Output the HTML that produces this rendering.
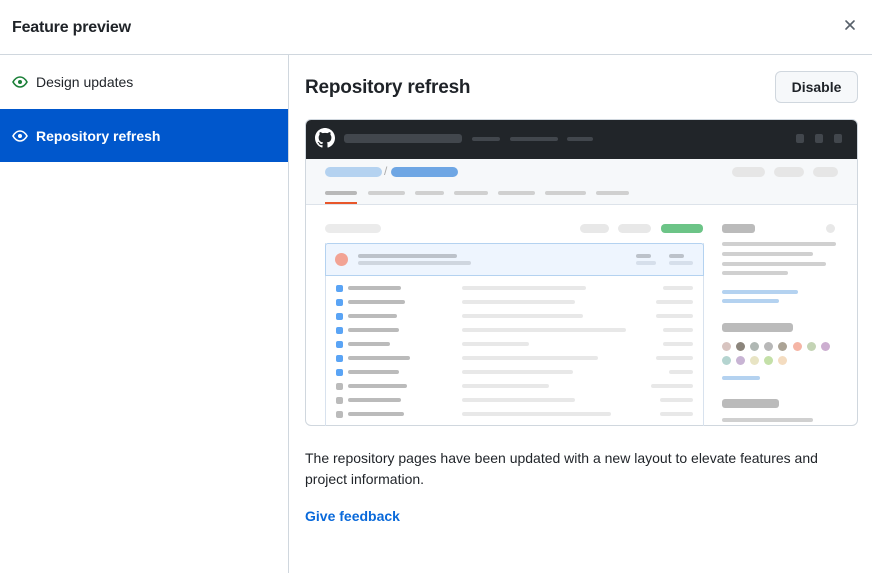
<!DOCTYPE html>
<html><head><meta charset="utf-8"><style>
*{margin:0;padding:0;box-sizing:border-box}
body{width:872px;height:573px;background:#fff;font-family:"Liberation Sans",sans-serif;color:#1f2328;position:relative;overflow:hidden}
.a{position:absolute}
.b{position:absolute;border-radius:3px}
.d{position:absolute;width:9px;height:9px;border-radius:50%}
</style></head><body>
<div class="a" style="left:12px;top:19px;font-size:16px;font-weight:bold;letter-spacing:-0.2px">Feature preview</div>
<svg class="a" style="left:844px;top:19px" width="12" height="12" viewBox="0 0 12 12"><path d="M2 2L10 10M10 2L2 10" stroke="#57606a" stroke-width="1.6" stroke-linecap="round"/></svg>
<div class="a" style="left:0;top:54px;width:872px;height:1px;background:#d0d7de"></div>
<div class="a" style="left:288px;top:55px;width:1px;height:518px;background:#d0d7de"></div>
<svg class="a" style="left:12px;top:76px" width="16" height="12" viewBox="0 0 16 12"><path d="M1 6C3 2.5 5.5 1 8 1s5 1.5 7 5c-2 3.5-4.5 5-7 5S3 9.5 1 6z" fill="none" stroke="#1a7f37" stroke-width="1.6"/><circle cx="8" cy="6" r="2" fill="#1a7f37"/></svg>
<div class="a" style="left:36px;top:74px;font-size:14px;color:#1f2328">Design updates</div>
<div class="a" style="left:0;top:109px;width:288px;height:53px;background:#0057cc"></div>
<svg class="a" style="left:12px;top:130px" width="16" height="12" viewBox="0 0 16 12"><path d="M1 6C3 2.5 5.5 1 8 1s5 1.5 7 5c-2 3.5-4.5 5-7 5S3 9.5 1 6z" fill="none" stroke="#fff" stroke-width="1.6"/><circle cx="8" cy="6" r="2" fill="#fff"/></svg>
<div class="a" style="left:36px;top:128px;font-size:14px;font-weight:bold;color:#fff">Repository refresh</div>

<div class="a" style="left:305px;top:77px;font-size:19px;font-weight:bold;letter-spacing:-0.2px">Repository refresh</div>
<div class="a" style="left:775px;top:71px;width:83px;height:32px;border:1px solid #d0d7de;border-radius:6px;background:#f6f8fa;font-size:14px;font-weight:bold;text-align:center;line-height:30px">Disable</div>

<div class="a" style="left:305px;top:119px;width:553px;height:307px;border:1px solid #d0d7de;border-radius:6px;overflow:hidden;background:#fff">
<div class="a" style="left:0;top:0;width:553px;height:39px;background:#212529"></div>
<div class="a" style="left:0;top:39px;width:553px;height:46px;background:#f6f8fa;border-bottom:1px solid #dde3ea"></div>
</div>
<svg class="a" style="left:315px;top:128px" width="20" height="20" viewBox="0 0 16 16"><path fill="#fff" d="M8 0C3.58 0 0 3.58 0 8c0 3.54 2.29 6.530 5.47 7.59.4.07.55-.17.55-.38 0-.19-.01-.82-.01-1.49-2.01.37-2.53-.49-2.69-.94-.09-.23-.48-.94-.82-1.13-.28-.15-.68-.52-.01-.53.63-.01 1.08.58 1.23.82.72 1.21 1.87.87 2.33.66.07-.52.28-.87.51-1.07-1.78-.2-3.64-.89-3.64-3.95 0-.87.31-1.59.82-2.15-.08-.2-.36-1.02.08-2.12 0 0 .67-.21 2.2.82.64-.18 1.32-.27 2-.27.68 0 1.36.09 2 .27 1.53-1.04 2.2-.82 2.2-.82.44 1.1.16 1.92.08 2.12.51.56.82 1.27.82 2.15 0 3.07-1.87 3.75-3.65 3.95.29.25.54.73.54 1.48 0 1.07-.01 1.93-.01 2.2 0 .21.15.46.55.38A8.013 8.013 0 0016 8c0-4.42-3.58-8-8-8z"/></svg>
<div class="b" style="left:344px;top:134px;width:118px;height:9px;background:#42474d"></div>
<div class="b" style="left:472px;top:137px;width:28px;height:4px;background:#42474d"></div>
<div class="b" style="left:510px;top:137px;width:48px;height:4px;background:#42474d"></div>
<div class="b" style="left:567px;top:137px;width:26px;height:4px;background:#42474d"></div>
<div class="b" style="left:796px;top:134px;width:8px;height:9px;background:#42474d;border-radius:2px"></div>
<div class="b" style="left:815px;top:134px;width:8px;height:9px;background:#42474d;border-radius:2px"></div>
<div class="b" style="left:834px;top:134px;width:8px;height:9px;background:#42474d;border-radius:2px"></div>

<div class="b" style="left:325px;top:167px;width:57px;height:10px;background:#b4d2f0;border-radius:5px"></div>
<div class="a" style="left:384px;top:164px;font-size:12px;color:#aaa">/</div>
<div class="b" style="left:391px;top:167px;width:67px;height:10px;background:#6ea6e4;border-radius:5px"></div>
<div class="b" style="left:732px;top:167px;width:33px;height:10px;background:#e6e6e6;border-radius:5px"></div>
<div class="b" style="left:774px;top:167px;width:30px;height:10px;background:#e6e6e6;border-radius:5px"></div>
<div class="b" style="left:813px;top:167px;width:25px;height:10px;background:#e6e6e6;border-radius:5px"></div>
<div class="b" style="left:325px;top:191px;width:32px;height:4px;background:#b8b8b8"></div>
<div class="b" style="left:368px;top:191px;width:37px;height:4px;background:#d0d0d0"></div>
<div class="b" style="left:415px;top:191px;width:29px;height:4px;background:#d0d0d0"></div>
<div class="b" style="left:454px;top:191px;width:34px;height:4px;background:#d0d0d0"></div>
<div class="b" style="left:498px;top:191px;width:37px;height:4px;background:#d0d0d0"></div>
<div class="b" style="left:545px;top:191px;width:41px;height:4px;background:#d0d0d0"></div>
<div class="b" style="left:596px;top:191px;width:33px;height:4px;background:#d0d0d0"></div>
<div class="a" style="left:325px;top:202px;width:32px;height:2px;background:#e8562a"></div>

<div class="b" style="left:325px;top:224px;width:56px;height:9px;background:#ebebeb;border-radius:5px"></div>
<div class="b" style="left:580px;top:224px;width:29px;height:9px;background:#e8e8e8;border-radius:5px"></div>
<div class="b" style="left:618px;top:224px;width:33px;height:9px;background:#e8e8e8;border-radius:5px"></div>
<div class="b" style="left:661px;top:224px;width:42px;height:9px;background:#6cc487;border-radius:4px"></div>

<div class="a" style="left:325px;top:243px;width:379px;height:183px;border-left:1px solid #d8e2ee;border-right:1px solid #d8e2ee"></div>
<div class="a" style="left:325px;top:243px;width:379px;height:33px;background:#eef5fe;border:1px solid #b4d2f0;border-radius:3px 3px 0 0"></div>
<div class="d" style="left:335px;top:253px;width:13px;height:13px;background:#f2a394"></div>
<div class="b" style="left:358px;top:254px;width:99px;height:4px;background:#bcc2ca"></div>
<div class="b" style="left:358px;top:261px;width:113px;height:4px;background:#cfd6df"></div>
<div class="b" style="left:636px;top:254px;width:15px;height:4px;background:#bcc2ca"></div>
<div class="b" style="left:636px;top:261px;width:20px;height:4px;background:#d6dfeb"></div>
<div class="b" style="left:669px;top:254px;width:15px;height:4px;background:#bcc2ca"></div>
<div class="b" style="left:669px;top:261px;width:24px;height:4px;background:#d6dfeb"></div>

<div class="b" style="left:336px;top:285px;width:7px;height:7px;background:#5aa4f5;border-radius:2px"></div><div class="b" style="left:348px;top:286px;width:53px;height:4px;background:#bbb"></div><div class="b" style="left:462px;top:286px;width:124px;height:4px;background:#e8e8e8"></div><div class="b" style="left:663px;top:286px;width:30px;height:4px;background:#e8e8e8"></div>
<div class="b" style="left:336px;top:299px;width:7px;height:7px;background:#5aa4f5;border-radius:2px"></div><div class="b" style="left:348px;top:300px;width:57px;height:4px;background:#bbb"></div><div class="b" style="left:462px;top:300px;width:113px;height:4px;background:#e8e8e8"></div><div class="b" style="left:656px;top:300px;width:37px;height:4px;background:#e8e8e8"></div>
<div class="b" style="left:336px;top:313px;width:7px;height:7px;background:#5aa4f5;border-radius:2px"></div><div class="b" style="left:348px;top:314px;width:49px;height:4px;background:#bbb"></div><div class="b" style="left:462px;top:314px;width:121px;height:4px;background:#e8e8e8"></div><div class="b" style="left:656px;top:314px;width:37px;height:4px;background:#e8e8e8"></div>
<div class="b" style="left:336px;top:327px;width:7px;height:7px;background:#5aa4f5;border-radius:2px"></div><div class="b" style="left:348px;top:328px;width:51px;height:4px;background:#bbb"></div><div class="b" style="left:462px;top:328px;width:164px;height:4px;background:#e8e8e8"></div><div class="b" style="left:663px;top:328px;width:30px;height:4px;background:#e8e8e8"></div>
<div class="b" style="left:336px;top:341px;width:7px;height:7px;background:#5aa4f5;border-radius:2px"></div><div class="b" style="left:348px;top:342px;width:42px;height:4px;background:#bbb"></div><div class="b" style="left:462px;top:342px;width:67px;height:4px;background:#e8e8e8"></div><div class="b" style="left:663px;top:342px;width:30px;height:4px;background:#e8e8e8"></div>
<div class="b" style="left:336px;top:355px;width:7px;height:7px;background:#5aa4f5;border-radius:2px"></div><div class="b" style="left:348px;top:356px;width:62px;height:4px;background:#bbb"></div><div class="b" style="left:462px;top:356px;width:136px;height:4px;background:#e8e8e8"></div><div class="b" style="left:656px;top:356px;width:37px;height:4px;background:#e8e8e8"></div>
<div class="b" style="left:336px;top:369px;width:7px;height:7px;background:#5aa4f5;border-radius:2px"></div><div class="b" style="left:348px;top:370px;width:51px;height:4px;background:#bbb"></div><div class="b" style="left:462px;top:370px;width:111px;height:4px;background:#e8e8e8"></div><div class="b" style="left:669px;top:370px;width:24px;height:4px;background:#e8e8e8"></div>
<div class="b" style="left:336px;top:383px;width:7px;height:7px;background:#bbb;border-radius:2px"></div><div class="b" style="left:348px;top:384px;width:59px;height:4px;background:#bbb"></div><div class="b" style="left:462px;top:384px;width:87px;height:4px;background:#e8e8e8"></div><div class="b" style="left:651px;top:384px;width:42px;height:4px;background:#e8e8e8"></div>
<div class="b" style="left:336px;top:397px;width:7px;height:7px;background:#bbb;border-radius:2px"></div><div class="b" style="left:348px;top:398px;width:53px;height:4px;background:#bbb"></div><div class="b" style="left:462px;top:398px;width:113px;height:4px;background:#e8e8e8"></div><div class="b" style="left:660px;top:398px;width:33px;height:4px;background:#e8e8e8"></div>
<div class="b" style="left:336px;top:411px;width:7px;height:7px;background:#bbb;border-radius:2px"></div><div class="b" style="left:348px;top:412px;width:56px;height:4px;background:#bbb"></div><div class="b" style="left:462px;top:412px;width:149px;height:4px;background:#e8e8e8"></div><div class="b" style="left:660px;top:412px;width:33px;height:4px;background:#e8e8e8"></div>

<div class="b" style="left:722px;top:224px;width:33px;height:9px;background:#bbb"></div>
<div class="d" style="left:826px;top:224px;background:#e8e8e8"></div>
<div class="b" style="left:722px;top:242px;width:114px;height:4px;background:#d0d0d0"></div>
<div class="b" style="left:722px;top:252px;width:91px;height:4px;background:#d0d0d0"></div>
<div class="b" style="left:722px;top:262px;width:104px;height:4px;background:#d0d0d0"></div>
<div class="b" style="left:722px;top:271px;width:66px;height:4px;background:#d0d0d0"></div>
<div class="b" style="left:722px;top:290px;width:76px;height:4px;background:#b4d2f0"></div>
<div class="b" style="left:722px;top:299px;width:57px;height:4px;background:#b4d2f0"></div>
<div class="b" style="left:722px;top:323px;width:71px;height:9px;background:#bbb"></div>
<div class="d" style="left:722px;top:342px;background:#d8c4c0"></div><div class="d" style="left:736px;top:342px;background:#8c857c"></div><div class="d" style="left:750px;top:342px;background:#b0b8b4"></div><div class="d" style="left:764px;top:342px;background:#b8b8b8"></div><div class="d" style="left:778px;top:342px;background:#aba395"></div><div class="d" style="left:793px;top:342px;background:#f5b5a5"></div><div class="d" style="left:807px;top:342px;background:#c4d4b5"></div><div class="d" style="left:821px;top:342px;background:#ccaed0"></div>
<div class="d" style="left:722px;top:356px;background:#b4d4d0"></div><div class="d" style="left:736px;top:356px;background:#c8b4d4"></div><div class="d" style="left:750px;top:356px;background:#e8e4c4"></div><div class="d" style="left:764px;top:356px;background:#c4e0a8"></div><div class="d" style="left:778px;top:356px;background:#f4dcc0"></div>
<div class="b" style="left:722px;top:376px;width:38px;height:4px;background:#b4d2f0"></div>
<div class="b" style="left:722px;top:399px;width:57px;height:9px;background:#bbb"></div>
<div class="b" style="left:722px;top:418px;width:91px;height:4px;background:#d0d0d0"></div>

<div class="a" style="left:305px;top:448px;width:550px;font-size:14px;line-height:21px;color:#1f2328">The repository pages have been updated with a new layout to elevate features and project information.</div>
<div class="a" style="left:305px;top:508px;font-size:14px;font-weight:bold;color:#0969da">Give feedback</div>
</body></html>
